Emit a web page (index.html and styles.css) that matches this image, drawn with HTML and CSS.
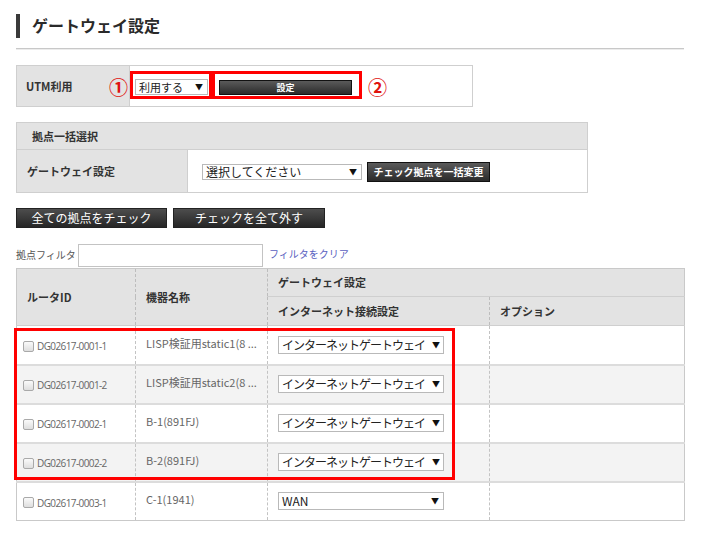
FILE: index.html
```html
<!DOCTYPE html>
<html lang="ja">
<head>
<meta charset="utf-8">
<link rel="stylesheet" href="styles.css">
</head>
<body>
<div class="page">
  <h1 class="title">ゲートウェイ設定</h1>
  <div class="rule"></div>

  <div class="utm">
    <div class="utm-label">UTM利用</div>
    <div class="utm-body">
      <div class="sel sel-utm"><span>利用する</span><span class="arr">▼</span></div>
      <button class="btn btn-set">設定</button>
    </div>
    <span class="num num1">①</span>
    <span class="num num2">②</span>
    <span class="mark mark1"></span>
    <span class="mark mark2"></span>
  </div>

  <div class="bulk">
    <div class="bulk-head">拠点一括選択</div>
    <div class="bulk-row">
      <div class="bulk-label">ゲートウェイ設定</div>
      <div class="bulk-body">
        <div class="sel sel-bulk"><span>選択してください</span><span class="arr">▼</span></div>
        <button class="btn btn-change">チェック拠点を一括変更</button>
      </div>
    </div>
  </div>

  <div class="actions">
    <button class="btn btn-big btn-all">全ての拠点をチェック</button>
    <button class="btn btn-big btn-none">チェックを全て外す</button>
  </div>

  <div class="filter">
    <span class="filter-label">拠点フィルタ</span>
    <span class="filter-input"></span>
    <a class="filter-clear">フィルタをクリア</a>
  </div>

  <div class="table-wrap">
    <table class="grid">
      <colgroup>
        <col class="c1"><col class="c2"><col class="c3"><col class="c4">
      </colgroup>
      <thead>
        <tr class="h1">
          <th rowspan="2">ルータID</th>
          <th rowspan="2">機器名称</th>
          <th colspan="2" class="gw">ゲートウェイ設定</th>
        </tr>
        <tr class="h2">
          <th>インターネット接続設定</th>
          <th>オプション</th>
        </tr>
      </thead>
      <tbody>
        <tr>
          <td><span class="cb"></span><span class="rid">DG02617-0001-1</span></td>
          <td class="name">LISP検証用static1(8 ...</td>
          <td><div class="sel sel-row"><span>インターネットゲートウェイ</span><span class="arr">▼</span></div></td>
          <td></td>
        </tr>
        <tr class="alt">
          <td><span class="cb"></span><span class="rid">DG02617-0001-2</span></td>
          <td class="name">LISP検証用static2(8 ...</td>
          <td><div class="sel sel-row"><span>インターネットゲートウェイ</span><span class="arr">▼</span></div></td>
          <td></td>
        </tr>
        <tr>
          <td><span class="cb"></span><span class="rid">DG02617-0002-1</span></td>
          <td class="name">B-1(891FJ)</td>
          <td><div class="sel sel-row"><span>インターネットゲートウェイ</span><span class="arr">▼</span></div></td>
          <td></td>
        </tr>
        <tr class="alt">
          <td><span class="cb"></span><span class="rid">DG02617-0002-2</span></td>
          <td class="name">B-2(891FJ)</td>
          <td><div class="sel sel-row"><span>インターネットゲートウェイ</span><span class="arr">▼</span></div></td>
          <td></td>
        </tr>
        <tr>
          <td><span class="cb"></span><span class="rid">DG02617-0003-1</span></td>
          <td class="name">C-1(1941)</td>
          <td><div class="sel sel-row sel-wan"><span>WAN</span><span class="arr">▼</span></div></td>
          <td></td>
        </tr>
      </tbody>
    </table>
    <span class="mark mark3"></span>
  </div>
</div>
</body>
</html>
```

FILE: styles.css
```css
* { box-sizing: border-box; }
html, body { margin: 0; padding: 0; background: #fff; }
body {
  font-family: "Noto Sans CJK JP", "Noto Sans", "Liberation Sans", sans-serif;
  color: #333;
}
.page {
  width: 716px;
  padding: 14px 32px 0 16px;
}
.title {
  margin: 0;
  height: 24px;
  border-left: 4px solid #3a3a3a;
  padding-left: 12px;
  font-size: 16px;
  line-height: 22px;
  font-weight: bold;
  color: #2a2a2a;
}
.rule {
  margin-top: 10px;
  height: 2px;
  border-top: 1px solid #c8c8c8;
  border-bottom: 1px solid #ececec;
}

/* UTM */
.utm {
  position: relative;
  margin-top: 15px;
  width: 457px;
  height: 42px;
  border: 1px solid #cfcfcf;
  display: flex;
}
.utm-label {
  width: 113px;
  background: #e3e3e3;
  border-right: 1px solid #cfcfcf;
  font-size: 11px;
  font-weight: bold;
  color: #333;
  padding-left: 9px;
  display: flex;
  align-items: center;
}
.utm-body {
  display: flex;
  align-items: center;
  padding-left: 5px;
  padding-top: 2px;
}
.sel {
  display: flex;
  align-items: center;
  justify-content: space-between;
  background: #fff;
  border: 1px solid #b9b9b9;
  font-size: 12px;
  color: #222;
  padding: 0 4px 0 3px;
  line-height: 1;
  white-space: nowrap;
  overflow: hidden;
}
.sel .arr { font-size: 8px; color: #111; flex: none; }
.sel-utm { width: 73px; height: 16px; font-size: 11px; }
.btn {
  font-family: inherit;
  color: #fff;
  font-weight: bold;
  border: 1px solid #111;
  background: linear-gradient(#5a5a5a, #2b2b2b);
  padding: 0;
  margin: 0;
  line-height: 1;
  cursor: pointer;
  white-space: nowrap;
}
.btn-set {
  margin-left: 11px;
  width: 133px;
  height: 15px;
  font-size: 9px;
}
.num {
  position: absolute;
  color: #e0120f;
  font-size: 19px;
  line-height: 19px;
  font-weight: bold;
}
.num1 { left: 92px; top: 11px; }
.num2 { left: 351px; top: 11px; }
.mark {
  position: absolute;
  border: 3px solid #f00;
}
.mark1 { left: 113px; top: 5px; width: 82px; height: 28px; }
.mark2 { left: 195px; top: 5px; width: 150px; height: 28px; }

/* bulk */
.bulk {
  margin-top: 15px;
  width: 572px;
  border: 1px solid #cfcfcf;
}
.bulk-head {
  height: 27px;
  background: #e3e3e3;
  border-bottom: 1px solid #cfcfcf;
  font-size: 11px;
  font-weight: bold;
  color: #333;
  padding-left: 15px;
  display: flex;
  align-items: center;
}
.bulk-row { display: flex; height: 42px; }
.bulk-label {
  width: 171px;
  background: #e3e3e3;
  border-right: 1px solid #cfcfcf;
  font-size: 11px;
  font-weight: bold;
  color: #333;
  padding-left: 10px;
  display: flex;
  align-items: center;
}
.bulk-body {
  display: flex;
  align-items: center;
  padding-left: 14px;
  padding-top: 2px;
}
.sel-bulk { width: 160px; height: 16px; }
.btn-change {
  margin-left: 5px;
  width: 123px;
  height: 20px;
  font-size: 10px;
}

/* actions */
.actions {
  margin-top: 15px;
  display: flex;
  gap: 6px;
}
.btn-big {
  height: 20px;
  font-size: 12px;
  font-weight: normal;
  border-color: #222;
  background: linear-gradient(#4d4d4d, #262626);
}
.btn-all { width: 151px; }
.btn-none { width: 152px; }

/* filter */
.filter {
  margin-top: 16px;
  display: flex;
  align-items: flex-end;
  height: 23px;
}
.filter-label {
  font-size: 10px;
  color: #555;
  width: 62px;
  padding-bottom: 5px;
}
.filter-input {
  width: 185px;
  height: 23px;
  border: 1px solid #c3c3c3;
  background: #fff;
}
.filter-clear {
  margin-left: 6px;
  font-size: 10px;
  color: #5a5fc0;
  padding-bottom: 6px;
}

/* table */
.table-wrap { position: relative; margin-top: 1px; }
.grid {
  width: 668px;
  border-collapse: collapse;
  table-layout: fixed;
  border: 1px solid #c9c9c9;
}
.c1 { width: 119px; }
.c2 { width: 132px; }
.c3 { width: 222px; }
.c4 { width: 195px; }
.grid th {
  background: #e3e3e3;
  font-size: 11px;
  font-weight: bold;
  color: #333;
  text-align: left;
  padding: 0 0 0 10px;
  border-left: 1px dashed #bdbdbd;
  border-bottom: 1px solid #cfcfcf;
}
.grid th:first-child { border-left: none; }
.grid .h1 th { height: 28px; }
.grid .h2 th { height: 29px; }
.grid .h2 th:first-child { border-left: 1px dashed #bdbdbd; }
.grid .gw { padding-bottom: 2px; }
.grid td {
  height: 39px;
  padding: 0 0 0 10px;
  border-left: 1px dashed #c3c3c3;
  border-bottom: 2px solid #dcdcdc;
  font-size: 11px;
  color: #666;
  vertical-align: middle;
  white-space: nowrap;
}
.grid td:first-child { border-left: none; padding-left: 6px; }
.grid tr.alt td { background: #f3f3f3; }
.grid tbody tr:last-child td { border-bottom: 1px solid #c9c9c9; }
.grid .name { padding-bottom: 4px; }
.cb {
  display: inline-block;
  width: 11px;
  height: 11px;
  border: 1px solid #a9a9a9;
  border-radius: 2px;
  background: linear-gradient(#fafafa, #dedede);
  vertical-align: middle;
  margin-right: 3px;
}
.rid {
  font-size: 10px;
  letter-spacing: -0.6px;
  color: #666;
  vertical-align: middle;
  font-family: "Open Sans", "Noto Sans", sans-serif;
}
.sel-row {
  width: 166px;
  height: 18px;
  font-size: 12px;
  letter-spacing: -1px;
  color: #222;
  padding-left: 3px;
}
.sel-wan { width: 166px; letter-spacing: 0; }
.mark3 {
  left: -2px;
  top: 60px;
  width: 441px;
  height: 152px;
}
```
